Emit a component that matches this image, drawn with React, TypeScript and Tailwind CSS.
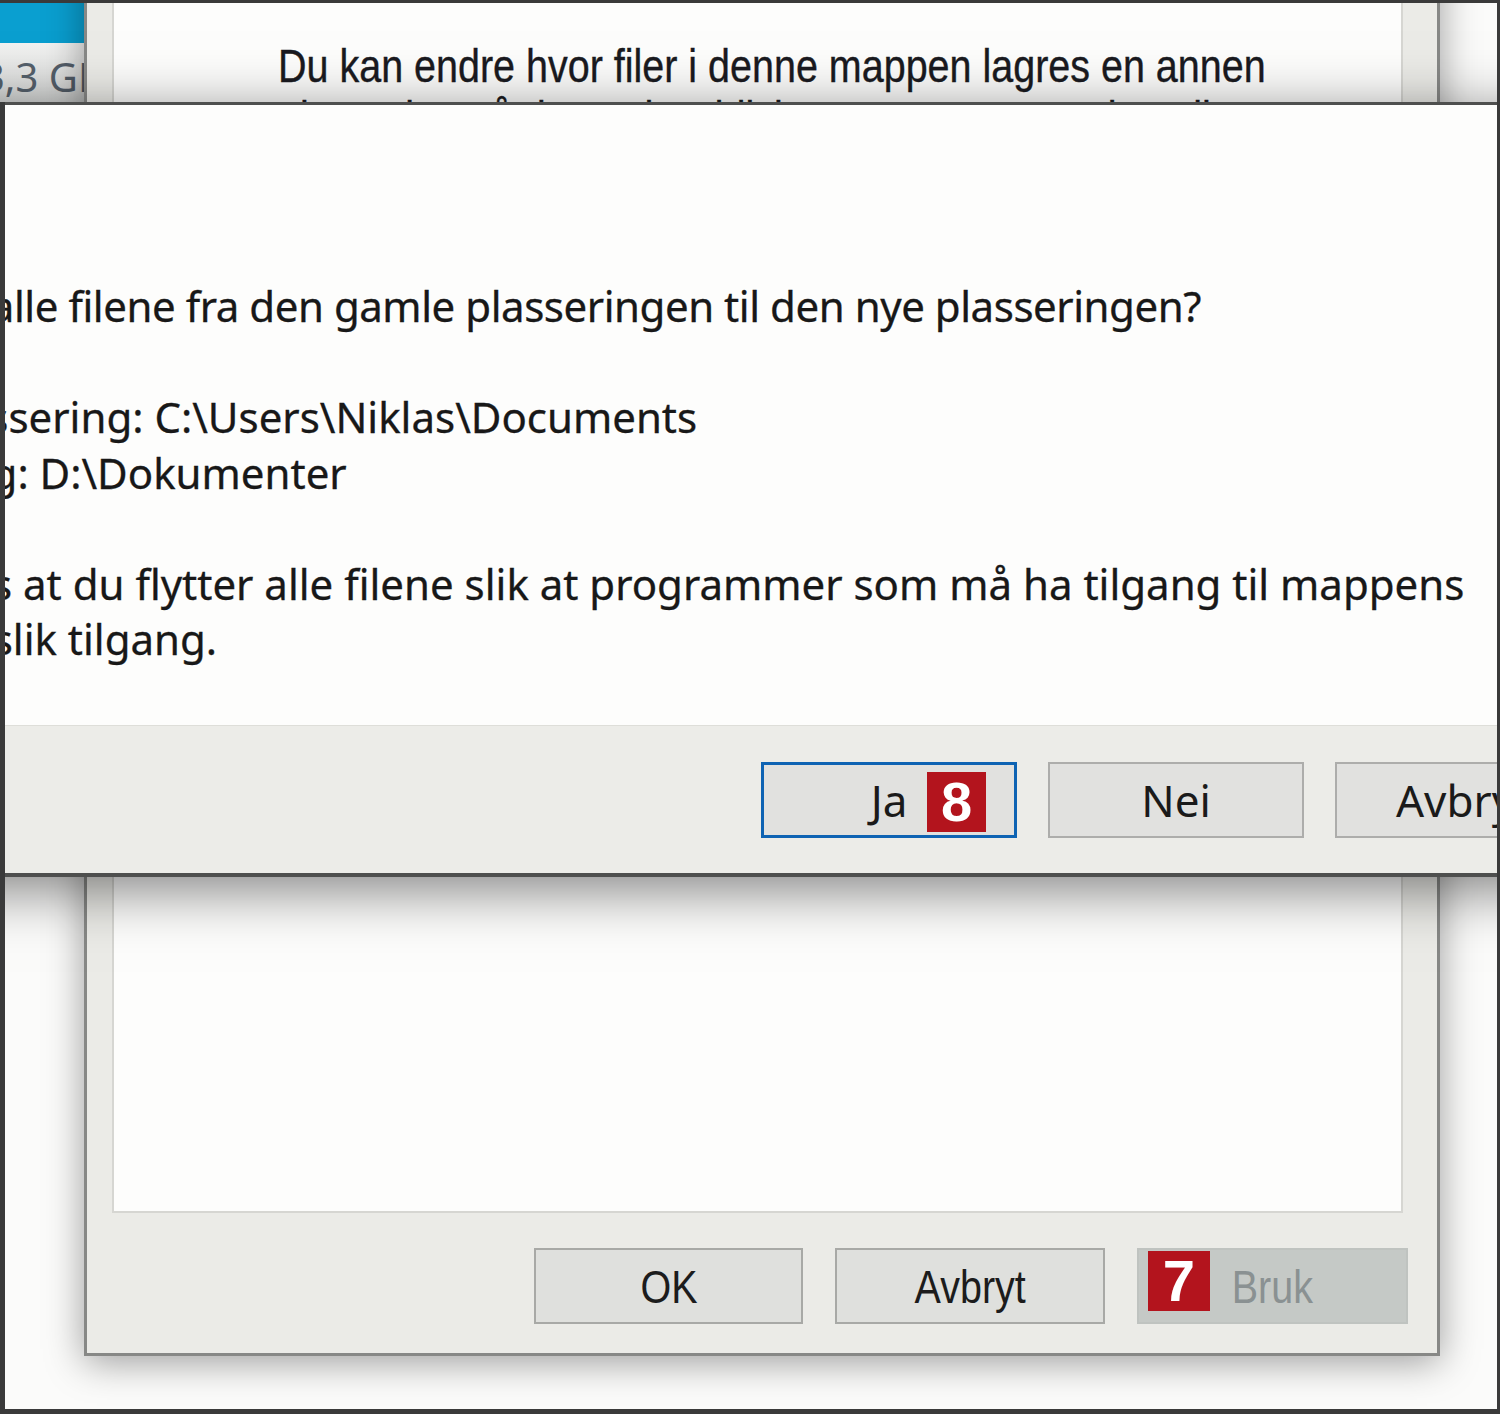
import React from "react";

function BackButton({ label, w, disabled, badge }: { label: string; w: string; disabled?: boolean; badge?: string }) {
  return (
    <div
      className={
        "relative h-[76px] flex items-center justify-center border-2 " +
        w +
        (disabled ? " bg-[#c5c9c6] border-[#bfc3c0]" : " bg-[#dfe0dd] border-[#a8a9a6]")
      }
    >
      <span
        className={
          "inline-block scale-x-[0.84] text-[47px] leading-none font-['Liberation_Sans',Arial,sans-serif] " +
          (disabled ? "text-[#8a9192]" : "text-[#1c1c1c]")
        }
      >
        {label}
      </span>
      {badge && (
        <div className="absolute left-[9px] top-[1px] w-[62px] h-[60px] bg-[#b3141d] flex items-center justify-center">
          <span className="text-white font-bold text-[58px] leading-none font-['Liberation_Sans',Arial,sans-serif]">{badge}</span>
        </div>
      )}
    </div>
  );
}

function FrontButton({ label, focused, badge }: { label: string; focused?: boolean; badge?: string }) {
  return (
    <div
      className={
        "relative w-[256px] h-[76px] shrink-0 flex items-center justify-center bg-[#e1e1df] " +
        (focused ? "border-[3px] border-[#0e63b3]" : "border-2 border-[#adadab]")
      }
    >
      <span className="text-[44px] leading-none text-[#1a1a1a] font-['Noto_Sans',sans-serif]">{label}</span>
      {badge && (
        <div className="absolute right-[28px] top-[7px] w-[59px] h-[60px] bg-[#b3141d] flex items-center justify-center">
          <span className="text-white font-bold text-[56px] leading-none font-['Liberation_Sans',Arial,sans-serif]">{badge}</span>
        </div>
      )}
    </div>
  );
}

export default function App() {
  return (
    <div className="relative w-[1500px] h-[1414px] overflow-hidden bg-[#fbfbfa] border-t-[3px] border-r-[3px] border-b-[5px] border-[#3a3a3a]">
      {/* Explorer window behind (top-left drive tile) */}
      <div className="absolute left-0 top-0 w-[84px] h-[100px] flex flex-col">
        <div className="h-[40px] bg-[#0a9fd0]" />
        <div className="flex-1 bg-gradient-to-b from-[#f2f2f1] to-[#d3d5d4] overflow-hidden whitespace-nowrap">
          <div className="ml-[-41px] pt-[10px] text-[40px] leading-[48px] text-[#55606b] font-['Noto_Sans',sans-serif]">23,3 GB ledig</div>
        </div>
      </div>

      {/* Back dialog (folder properties) */}
      <div className="absolute left-[84px] top-[-120px] w-[1356px] h-[1473px] flex flex-col bg-[#ebebe7] border-[3px] border-[#878886] shadow-[0_6px_36px_rgba(0,0,0,0.38)]">
        <div className="flex-1 ml-[25px] mr-[34px] bg-[#fdfdfc] border-2 border-[#d6d6d2] pt-[152px] pl-[164px] overflow-hidden">
          <div className="font-['Liberation_Sans',Arial,sans-serif] text-[47px] leading-[52px] text-[#1a1a20] whitespace-nowrap [-webkit-text-stroke:0.4px_#1a1a20]">
            <div className="origin-left scale-x-[0.84]">Du kan endre hvor filer i denne mappen lagres en annen</div>
            <div className="origin-left scale-x-[0.84]">plassering på denne harddisken, en annen stasjon eller en annen</div>
            <div className="origin-left scale-x-[0.84]">datamaskin i nettverket.</div>
          </div>
        </div>
        <div className="mt-[35px] mb-[29px] mr-[29px] flex justify-end gap-[32px]">
          <BackButton label="OK" w="w-[269px]" />
          <BackButton label="Avbryt" w="w-[270px]" />
          <BackButton label="Bruk" w="w-[271px]" disabled badge="7" />
        </div>
      </div>

      {/* Front dialog (move files?) */}
      <div className="absolute left-[-400px] top-[99px] w-[2021px] z-10 flex flex-col border-t-[3px] border-b-[4px] border-[#4e4f4e] bg-[#fdfdfc] shadow-[0_12px_56px_rgba(0,0,0,0.5)]">
        <div className="h-[620px] pt-[173px] overflow-hidden font-['Noto_Sans',sans-serif] text-[42px] leading-[55.5px] text-[#181818] whitespace-nowrap [-webkit-text-stroke:0.3px_#181818]">
          <div className="ml-[165px] tracking-[-0.45px]">Vil du flytte alle filene fra den gamle plasseringen til den nye plasseringen?</div>
          <div className="h-[55.5px]" />
          <div className="ml-[150px]">Gammel plassering: C:\Users\Niklas\Documents</div>
          <div className="ml-[149px]">Ny plassering: D:\Dokumenter</div>
          <div className="h-[55.5px]" />
          <div className="ml-[140px]">Det anbefales at du flytter alle filene slik at programmer som må ha tilgang til mappens</div>
          <div className="ml-[65px]">filer, fortsatt har slik tilgang.</div>
        </div>
        <div className="h-[148px] bg-[#ecece8] border-t border-[#deded9] flex items-center justify-end gap-[31px] pr-[30px]">
          <FrontButton label="Ja" focused badge="8" />
          <FrontButton label="Nei" />
          <FrontButton label="Avbryt" />
        </div>
      </div>

      {/* Left edge of the screenshot frame */}
      <div className="absolute left-0 top-[99px] bottom-0 w-[5px] bg-[#3a3a3a] z-20" />
    </div>
  );
}
